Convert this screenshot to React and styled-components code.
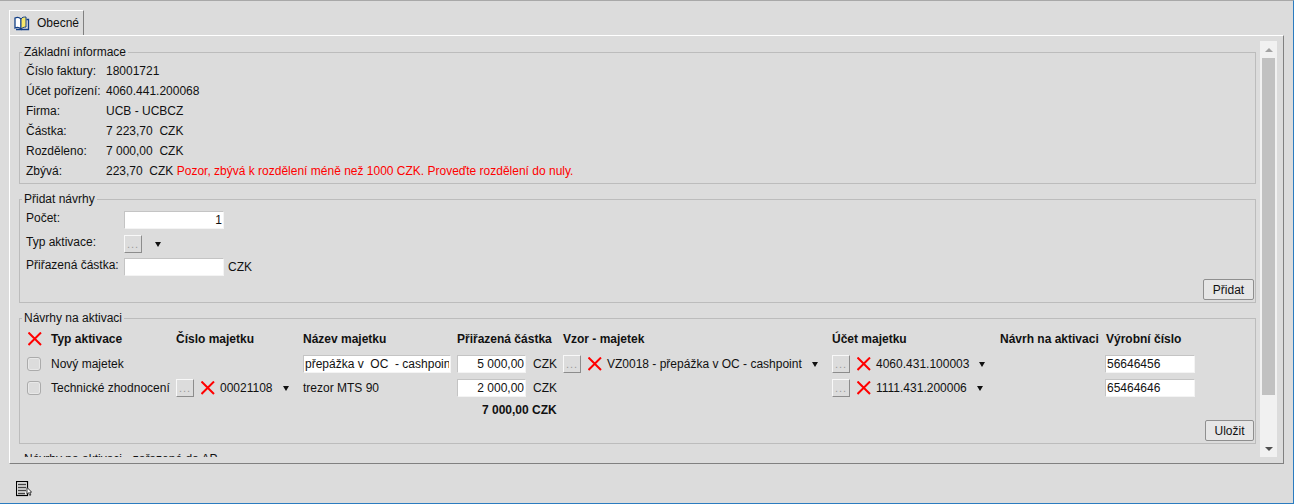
import React from "react";
import styled, { createGlobalStyle } from "styled-components";

const GlobalStyle = createGlobalStyle`
  html, body {
    margin: 0;
    padding: 0;
    background: #dcdcdc;
  }
  * {
    box-sizing: border-box;
  }
`;

const Page = styled.div`
  width: 1294px;
  height: 504px;
  display: flex;
  flex-direction: column;
  padding: 9px 9px 0;
  background: #dcdcdc;
  border-top: 1px solid #a8a8a8;
  border-right: 1px solid #2b7cc0;
  border-bottom: 1px solid #2b7cc0;
  font-family: "Liberation Sans", Arial, sans-serif;
  font-size: 12px;
  color: #111;
`;

const TabBar = styled.div`
  display: flex;
  height: 25px;
`;

const Tab = styled.div`
  display: flex;
  align-items: center;
  gap: 7px;
  width: 75px;
  padding: 0 0 0 4px;
  border-top: 1px solid #fff;
  border-left: 1px solid #fff;
  border-right: 1px solid #808080;
`;

const Panel = styled.div`
  height: 429px;
  width: 1275px;
  display: flex;
  padding: 5px 6px 5px 9px;
  border-top: 1px solid #fff;
  border-left: 1px solid #fff;
  border-right: 1px solid #808080;
  border-bottom: 1px solid #808080;
`;

const Content = styled.div`
  flex: 1;
  height: 416px;
  overflow: hidden;
  display: flex;
  flex-direction: column;
  gap: 8px;
  padding-top: 4px;
  margin-right: 4px;
`;

const Group = styled.fieldset`
  margin: 0;
  padding: 0 0 0 6px;
  border: 1px solid #bcbcbc;
  flex-shrink: 0;
  height: ${(p) => p.$height}px;
  min-width: 0;
`;

const Legend = styled.legend`
  margin-left: -4px;
  padding: 0 2px;
  line-height: 14px;
`;

const InfoGrid = styled.div`
  display: grid;
  grid-template-columns: 80px 1fr;
  grid-auto-rows: 20px;
  align-items: center;
  margin-top: 2px;
`;

const Warning = styled.span`
  color: #f00;
`;

const FormRows = styled.div`
  display: grid;
  grid-template-columns: 98px 1fr;
  grid-template-rows: 24px 23px 24px;
  margin-top: 5px;
`;

const FormLabel = styled.div`
  line-height: 14px;
`;

const FormField = styled.div`
  display: flex;
  align-items: flex-start;
  gap: 4px;
`;

const TextInput = styled.input`
  width: ${(p) => p.$width}px;
  height: 18px;
  margin-left: ${(p) => p.$shift || 0}px;
  padding: 0 1px;
  border: 1px solid #f4f4f4;
  border-top-color: #c4c4c4;
  border-left-color: #c4c4c4;
  background: #fff;
  font: inherit;
  color: inherit;
  text-align: ${(p) => p.$align || "left"};
  outline: none;
`;

const DotsButton = styled.div`
  width: 18px;
  height: 18px;
  flex-shrink: 0;
  display: flex;
  align-items: center;
  justify-content: center;
  border: 1px solid;
  border-color: #f8f8f8 #8c8c8c #8c8c8c #f8f8f8;
  color: #9a9a9a;
  font-size: 11px;
  letter-spacing: 1px;
`;

const Arrow = styled.span`
  width: 0;
  height: 0;
  flex-shrink: 0;
  margin-left: ${(p) => p.$gap}px;
  margin-top: ${(p) => p.$top || 0}px;
  border-left: 3px solid transparent;
  border-right: 3px solid transparent;
  border-top: 5px solid #111;
`;

const Unit = styled.span`
  margin-left: ${(p) => p.$gap || 0}px;
  padding-top: ${(p) => p.$top || 0}px;
`;

const ActionRow = styled.div`
  display: flex;
  justify-content: flex-end;
  padding-right: 1px;
  margin-top: ${(p) => p.$top}px;
`;

const ActionButton = styled.div`
  display: flex;
  align-items: center;
  justify-content: center;
  width: ${(p) => p.$width}px;
  height: 21px;
  border: 1px solid #8f8f8f;
  border-radius: 2px;
  background: #e6e6e6;
`;

const ProposalGrid = styled.div`
  display: grid;
  grid-template-columns: 24px 125px 127px 154px 106px 269px 168px 106px 1fr;
  grid-template-rows: 25px 24px 24px 20px;
  align-items: center;
  margin: 2px 0 0 1px;
`;

const HeadCell = styled.div`
  display: flex;
  font-weight: 700;
  white-space: nowrap;
  padding-bottom: 2px;
`;

const Cell = styled.div`
  display: flex;
  align-items: center;
  white-space: nowrap;
  min-width: 0;
`;

const Total = styled(Cell)`
  font-weight: 700;
  grid-column: 5;
  padding-left: 25px;
`;

const Check = styled.div`
  width: 14px;
  height: 14px;
  border: 1px solid #ababab;
  border-radius: 3px;
  background: #dcdcdc;
  box-shadow: inset 0 0 0 1px #e8e8e8;
`;

const Code = styled.span`
  margin-left: 5px;
`;

const CrossSvg = styled.svg`
  flex-shrink: 0;
  margin-left: ${(p) => p.$left}px;
`;

const ScrollTrack = styled.div`
  width: 17px;
  height: 416px;
  flex-shrink: 0;
  display: flex;
  flex-direction: column;
  align-items: center;
  background: #f1f1f1;
`;

const ScrollEnd = styled.div`
  height: 17px;
  width: 100%;
  display: flex;
  align-items: center;
  justify-content: center;
`;

const ScrollThumb = styled.div`
  width: 13px;
  height: 337px;
  background: #c1c1c1;
`;

const ScrollGap = styled.div`
  flex: 1;
`;

const ScrollUp = styled.span`
  border-left: 4px solid transparent;
  border-right: 4px solid transparent;
  border-bottom: 4px solid #a3a3a3;
`;

const ScrollDown = styled.span`
  border-left: 4px solid transparent;
  border-right: 4px solid transparent;
  border-top: 4px solid #505050;
`;

const Footer = styled.div`
  display: flex;
  padding: 17px 0 0 7px;
`;

const CrossIcon = ({ left = 0 }) => (
  <CrossSvg $left={left} width="14" height="14" viewBox="0 0 14 14">
    <path d="M0.5 0.5 L13 13 M13 0.5 L0.5 13" stroke="#f00" strokeWidth="2" fill="none" />
  </CrossSvg>
);

const BookIcon = () => (
  <svg width="16" height="16" viewBox="0 0 16 16">
    <path d="M1 3 V13 C3 12 5 12 7 14 V4 C5 2 3 2 1 3 Z" fill="#fff" stroke="#123f86" strokeWidth="1.3" />
    <path d="M7 4 C8 2 10 2 12 2 V12 C10 12 8 13 7 14 Z" fill="#f7e86a" stroke="#123f86" />
    <path d="M12.5 4.5 H14.5 V14.5 H2" fill="none" stroke="#123f86" strokeWidth="1.3" />
  </svg>
);

const ReportIcon = () => (
  <svg width="16" height="16" viewBox="0 0 16 16">
    <rect x="0.5" y="0.5" width="11" height="14" fill="#eee" stroke="#000" strokeWidth="1.2" />
    <path d="M2 3.5 H10 M2 6.5 H10 M2 9.5 H10 M2 12.5 H9" stroke="#444" strokeWidth="1.4" />
    <path d="M11 6.5 V13 L12.6 11.8 L13.8 14.5 L14.8 14 L13.8 11.2 L15.6 11 Z" fill="#fff" stroke="#111" strokeWidth="0.8" />
  </svg>
);

const info = [
  ["Číslo faktury:", "18001721"],
  ["Účet pořízení:", "4060.441.200068"],
  ["Firma:", "UCB - UCBCZ"],
  ["Částka:", "7 223,70\u00a0\u00a0CZK"],
  ["Rozděleno:", "7 000,00\u00a0\u00a0CZK"],
];

export default function App() {
  return (
    <>
      <GlobalStyle />
      <Page>
        <TabBar>
          <Tab>
            <BookIcon />
            Obecné
          </Tab>
        </TabBar>
        <Panel>
          <Content>
            <Group $height={139}>
              <Legend>Základní informace</Legend>
              <InfoGrid>
                {info.map(([label, value]) => (
                  <React.Fragment key={label}>
                    <div>{label}</div>
                    <div>{value}</div>
                  </React.Fragment>
                ))}
                <div>Zbývá:</div>
                <div>
                  223,70&nbsp;&nbsp;CZK <Warning>Pozor, zbývá k rozdělení méně než 1000 CZK. Proveďte rozdělení do nuly.</Warning>
                </div>
              </InfoGrid>
            </Group>

            <Group $height={111}>
              <Legend>Přidat návrhy</Legend>
              <FormRows>
                <FormLabel>Počet:</FormLabel>
                <FormField>
                  <TextInput $width={100} $align="right" value="1" readOnly />
                </FormField>
                <FormLabel>Typ aktivace:</FormLabel>
                <FormField>
                  <DotsButton>...</DotsButton>
                  <Arrow $gap={9} $top={7} />
                </FormField>
                <FormLabel>Přiřazená částka:</FormLabel>
                <FormField>
                  <TextInput $width={100} value="" readOnly />
                  <Unit $top={2}>CZK</Unit>
                </FormField>
              </FormRows>
              <ActionRow $top={-3}>
                <ActionButton $width={51}>Přidat</ActionButton>
              </ActionRow>
            </Group>

            <Group $height={133}>
              <Legend>Návrhy na aktivaci</Legend>
              <ProposalGrid>
                <HeadCell><CrossIcon left={1} /></HeadCell>
                <HeadCell>Typ aktivace</HeadCell>
                <HeadCell>Číslo majetku</HeadCell>
                <HeadCell>Název majetku</HeadCell>
                <HeadCell>Přiřazená částka</HeadCell>
                <HeadCell>Vzor - majetek</HeadCell>
                <HeadCell>Účet majetku</HeadCell>
                <HeadCell>Návrh na aktivaci</HeadCell>
                <HeadCell>Výrobní číslo</HeadCell>

                <Cell><Check /></Cell>
                <Cell>Nový majetek</Cell>
                <Cell />
                <Cell><TextInput $width={148} value="přepážka v  OC  - cashpoint" readOnly /></Cell>
                <Cell>
                  <TextInput $width={69} $align="right" value="5 000,00" readOnly />
                  <Unit $gap={7}>CZK</Unit>
                </Cell>
                <Cell>
                  <DotsButton>...</DotsButton>
                  <CrossIcon left={7} />
                  <Code>VZ0018 - přepážka v OC - cashpoint</Code>
                  <Arrow $gap={10} />
                </Cell>
                <Cell>
                  <DotsButton>...</DotsButton>
                  <CrossIcon left={7} />
                  <Code>4060.431.100003</Code>
                  <Arrow $gap={10} />
                </Cell>
                <Cell />
                <Cell><TextInput $width={90} $shift={-1} value="56646456" readOnly /></Cell>

                <Cell><Check /></Cell>
                <Cell>Technické zhodnocení</Cell>
                <Cell>
                  <DotsButton>...</DotsButton>
                  <CrossIcon left={7} />
                  <Code>00021108</Code>
                  <Arrow $gap={10} />
                </Cell>
                <Cell>trezor MTS 90</Cell>
                <Cell>
                  <TextInput $width={69} $align="right" value="2 000,00" readOnly />
                  <Unit $gap={7}>CZK</Unit>
                </Cell>
                <Cell />
                <Cell>
                  <DotsButton>...</DotsButton>
                  <CrossIcon left={7} />
                  <Code>1111.431.200006</Code>
                  <Arrow $gap={10} />
                </Cell>
                <Cell />
                <Cell><TextInput $width={90} $shift={-1} value="65464646" readOnly /></Cell>

                <Total>7 000,00 CZK</Total>
              </ProposalGrid>
              <ActionRow $top={0}>
                <ActionButton $width={49}>Uložit</ActionButton>
              </ActionRow>
            </Group>

            <Group $height={20}>
              <Legend>Návrhy na aktivaci - zařazené do AP</Legend>
            </Group>
          </Content>
          <ScrollTrack>
            <ScrollEnd><ScrollUp /></ScrollEnd>
            <ScrollThumb />
            <ScrollGap />
            <ScrollEnd><ScrollDown /></ScrollEnd>
          </ScrollTrack>
        </Panel>
        <Footer>
          <ReportIcon />
        </Footer>
      </Page>
    </>
  );
}
